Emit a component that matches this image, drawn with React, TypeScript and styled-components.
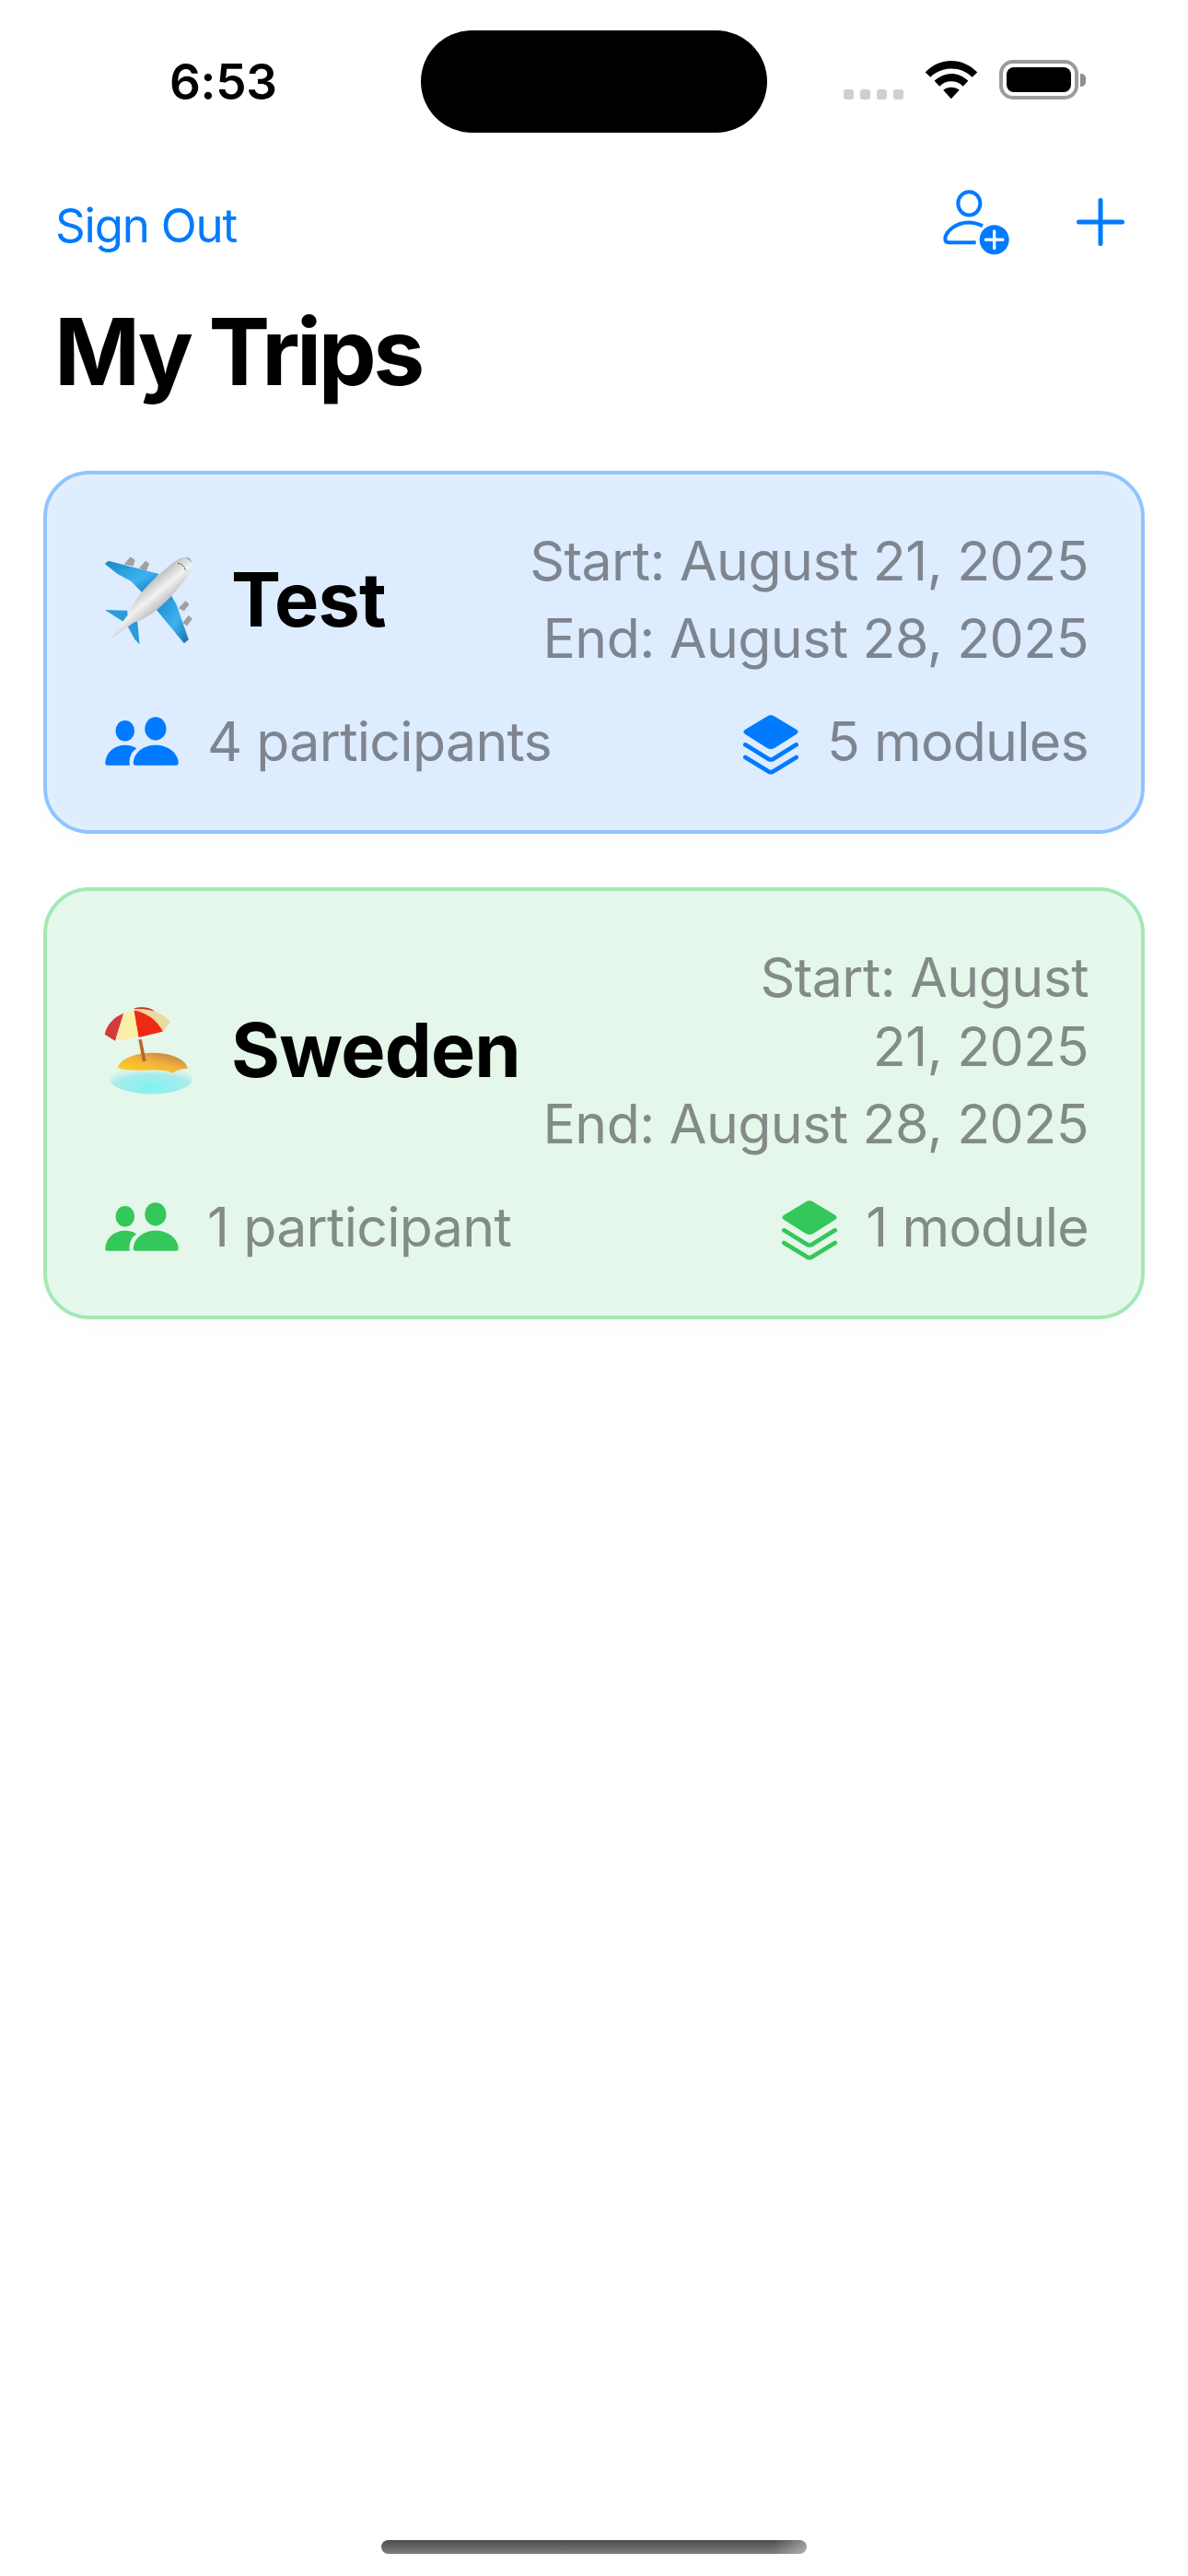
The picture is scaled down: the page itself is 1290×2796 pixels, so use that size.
import styled, { createGlobalStyle } from 'styled-components';

const GlobalStyle = createGlobalStyle`
  html, body {
    margin: 0;
    padding: 0;
    background: #ffffff;
  }
  body {
    font-family: Inter, "Liberation Sans", sans-serif;
  }
`;

type Tone = 'blue' | 'green';

const tones = {
  blue: { bg: '#ddecfe', edge: '#e6f1ff', border: '#90c4ff', text: '#7f8590', icon: '#007aff' },
  green: { bg: '#e4f7ea', edge: '#ebf9f0', border: '#a3e8b5', text: '#848a88', icon: '#34c759' },
};

const Page = styled.div`
  width: 1290px;
  min-height: 2796px;
  display: flex;
  flex-direction: column;
  background: #ffffff;
`;

const StatusBar = styled.div`
  display: grid;
  grid-template-columns: 457px 376px 1fr;
  padding-top: 33px;
`;

const Time = styled.div`
  padding-left: 184px;
  align-self: center;
  font-size: 53px;
  font-weight: 600;
  letter-spacing: -0.3px;
  color: #000;
`;

const Island = styled.div`
  height: 111px;
  border-radius: 56px;
  background: #000;
`;

const StatusIcons = styled.div`
  display: flex;
  align-items: flex-end;
  gap: 23px;
  padding: 32px 0 0 83px;
  align-self: start;
`;

const SignalDots = styled.div`
  display: flex;
  gap: 7px;
`;

const SignalDot = styled.span`
  width: 11px;
  height: 11px;
  border-radius: 3px;
  background: #cfcfcf;
`;

const Battery = styled.div`
  display: flex;
  align-items: center;
  gap: 2px;
`;

const BatteryShell = styled.div`
  box-sizing: border-box;
  width: 86px;
  height: 43px;
  padding: 4px;
  border: 4px solid #9c9c9c;
  border-radius: 15px;
  background: #fff;
`;

const BatteryFill = styled.div`
  height: 100%;
  border-radius: 8px;
  background: #000;
`;

const BatteryNub = styled.div`
  width: 6px;
  height: 14px;
  border-radius: 0 5px 5px 0;
  background: #8e8e8e;
`;

const NavRow = styled.div`
  display: flex;
  align-items: center;
  justify-content: space-between;
  margin-top: 61px;
  padding: 0 69px 0 60px;
  height: 72px;
`;

const SignOut = styled.button`
  border: 0;
  padding: 6px 0 0;
  background: none;
  font: 400 51px Inter, "Liberation Sans", sans-serif;
  letter-spacing: -1.2px;
  color: #007aff;
`;

const NavActions = styled.div`
  display: flex;
  align-items: center;
  gap: 72px;
`;

const Title = styled.h1`
  margin: 44px 0 0 59px;
  font-size: 100px;
  line-height: 121px;
  font-weight: 700;
  letter-spacing: -3.5px;
  color: #000;
`;

const CardList = styled.div`
  display: flex;
  flex-direction: column;
  gap: 58px;
  margin: 0 47px;
  padding-top: 69px;
`;

const Card = styled.section<{ $tone: Tone }>`
  padding: 56px 57px 59px 58px;
  border: 4px solid ${(p) => tones[p.$tone].border};
  border-radius: 50px;
  background: ${(p) => tones[p.$tone].bg};
  box-shadow:
    inset 0 0 24px ${(p) => tones[p.$tone].edge},
    0 6px 30px rgba(0, 0, 0, 0.015);
`;

const CardTop = styled.div`
  display: flex;
  align-items: center;
  justify-content: space-between;
`;

const Lead = styled.div`
  display: flex;
  align-items: center;
  gap: 41px;
  padding-left: 4px;
`;

const TripName = styled.h2`
  margin: 0;
  font-size: 81px;
  line-height: 96px;
  font-weight: 700;
  letter-spacing: -0.8px;
  color: #000;
`;

const Dates = styled.div`
  display: flex;
  flex-direction: column;
  gap: 9px;
  text-align: right;
`;

const DateLine = styled.div<{ $tone: Tone }>`
  font-size: 59px;
  font-weight: 430;
  line-height: 75px;
  letter-spacing: -0.55px;
  white-space: pre-line;
  color: ${(p) => tones[p.$tone].text};
`;

const CardFooter = styled.div`
  display: flex;
  align-items: center;
  justify-content: space-between;
  margin-top: 37px;
`;

const Stat = styled.div<{ $inset?: boolean }>`
  display: flex;
  align-items: center;
  gap: 31px;
  padding-left: ${(p) => (p.$inset ? '5px' : '0')};
`;

const StatText = styled.span<{ $tone: Tone }>`
  font-size: 59px;
  font-weight: 430;
  line-height: 75px;
  letter-spacing: -0.7px;
  color: ${(p) => tones[p.$tone].text};
`;

const LayersSvg = styled.svg`
  margin-top: 7px;
`;

const HomeIndicator = styled.div`
  width: 462px;
  height: 15px;
  margin: auto auto 24px;
  border-radius: 8px;
  background:
    linear-gradient(100deg, rgba(255, 255, 255, 0) 92%, rgba(255, 255, 255, 0.4)),
    linear-gradient(180deg, #4e4e4e, #7e7e7e);
`;

const WifiIcon = () => (
  <svg width="58" height="43" viewBox="670 103 175 130" fill="#000">
    <path d="M672 144C720 93 795 93 843 144L826 160C790 122 725 122 689 160Z" />
    <path d="M702 172C735 140 780 140 813 172L796 190C775 168 740 168 719 190Z" />
    <path d="M731 202C745 190 770 190 784 202L757 231Z" />
  </svg>
);

const PersonAddIcon = () => (
  <svg width="75" height="72" viewBox="725 525 225 215" fill="none">
    <ellipse cx="816" cy="572" rx="36" ry="38" stroke="#007aff" strokeWidth="12" />
    <path
      d="M860 645C842 637 828 634 815 634C772 634 738 664 738 688Q738 699 750 699L838 699"
      stroke="#007aff"
      strokeWidth="12"
    />
    <circle cx="898" cy="690" r="48" fill="#007aff" />
    <path d="M898 662V718M870 690H926" stroke="#fff" strokeWidth="10" strokeLinecap="round" />
  </svg>
);

const PlusIcon = () => (
  <svg width="52" height="52" viewBox="0 0 52 52" fill="none">
    <path d="M26 2.5V49.5M2.5 26H49.5" stroke="#007aff" strokeWidth="5" strokeLinecap="round" />
  </svg>
);

const PeopleIcon = ({ color }: { color: string }) => (
  <svg width="80" height="53" viewBox="45 48 240 160" fill={color}>
    <ellipse cx="110" cy="94" rx="31" ry="34" />
    <ellipse cx="210" cy="87" rx="35" ry="38" />
    <path d="M45 198C48 165 75 141 110 141C125 141 138 145 148 152C132 160 122 180 125 207L52 207Q45 207 45 198Z" />
    <path d="M137 198C140 165 170 141 210 141C250 141 282 165 285 198Q285 207 277 207L145 207Q137 207 137 198Z" />
  </svg>
);

const LayersIcon = ({ color }: { color: string }) => (
  <LayersSvg width="60" height="65" viewBox="83 45 180 195" fill="none">
    <path d="M160 50Q173 42 186 50L256 92Q268 100 256 108L186 152Q173 160 160 152L90 108Q78 100 90 92Z" fill={color} />
    <path d="M90 142L165 188Q173 193 181 188L256 142" stroke={color} strokeWidth="14" strokeLinecap="round" />
    <path d="M90 183L165 229Q173 234 181 229L256 183" stroke={color} strokeWidth="14" strokeLinecap="round" />
  </LayersSvg>
);

const PlaneEmoji = () => (
  <svg width="97" height="100" viewBox="70 60 290 300">
    <defs>
      <linearGradient id="wing" x1="0" y1="0" x2="1" y2="1">
        <stop offset="0" stopColor="#1786c9" />
        <stop offset="0.6" stopColor="#3cb2f0" />
        <stop offset="1" stopColor="#156fa8" />
      </linearGradient>
      <linearGradient id="body" x1="0.25" y1="0.2" x2="0.75" y2="0.8">
        <stop offset="0" stopColor="#7d7d7d" />
        <stop offset="0.5" stopColor="#f2f2f2" />
        <stop offset="1" stopColor="#767676" />
      </linearGradient>
    </defs>
    <g fill="#a0a0a0">
      <path d="M135 95L155 70L170 80L165 100Z" />
      <path d="M183 107L205 83L217 92L207 116Z" />
      <path d="M312 238L335 213L347 225L330 247Z" />
      <path d="M325 285L345 260L357 272L340 295Z" />
    </g>
    <path d="M72 93L84 83L248 126L195 188L158 150L112 125Z" fill="url(#wing)" />
    <path d="M282 185L305 225L345 340L330 352L238 240Z" fill="url(#wing)" />
    <path d="M72 243L145 245L150 285L130 280Z" fill="#2a9bdb" />
    <path d="M140 285L178 278L185 355L170 340Z" fill="#2a9bdb" />
    <path
      d="M92 332L150 255C170 200 230 140 300 85C325 65 350 70 355 85C362 110 340 140 300 185C260 230 215 270 165 285L96 335Z"
      fill="url(#body)"
    />
    <path d="M335 72C345 72 353 78 355 90C352 84 345 78 335 72Z" fill="#35a5e0" />
    <path d="M310 92C322 92 332 100 335 116" fill="none" stroke="#444" strokeWidth="3" strokeDasharray="6 3" />
  </svg>
);

const IslandEmoji = () => (
  <svg width="97" height="96" viewBox="70 65 285 282">
    <defs>
      <radialGradient id="water" cx="0.5" cy="0.75" r="0.6">
        <stop offset="0" stopColor="#7df3f2" />
        <stop offset="0.75" stopColor="#a8ecec" />
        <stop offset="1" stopColor="#d2f3ec" />
      </radialGradient>
      <linearGradient id="sand" x1="0" y1="1" x2="0.8" y2="0">
        <stop offset="0" stopColor="#fbdc1e" />
        <stop offset="0.6" stopColor="#f2ae3c" />
        <stop offset="1" stopColor="#b5834b" />
      </linearGradient>
    </defs>
    <ellipse cx="221" cy="300" rx="131" ry="45" fill="url(#water)" />
    <path
      d="M113 262C118 235 165 213 225 213C285 213 335 235 338 266C330 265 305 268 290 280C250 262 200 275 150 270C135 268 120 268 113 262Z"
      fill="url(#sand)"
      stroke="#eef8ea"
      strokeWidth="2"
    />
    <path d="M180 172L190 171L204 240L193 242Z" fill="#b8682a" />
    <path d="M165 72C185 66 215 66 232 82L170 78Z" fill="#d42a28" />
    <path d="M168 74C215 70 265 90 281 116L258 146C240 110 205 85 165 78Z" fill="#ecd9a0" />
    <path d="M165 78C205 85 240 110 258 146C235 152 205 160 180 165Z" fill="#ee2a14" />
    <path d="M132 88C145 82 155 80 165 78L180 165C150 168 125 172 105 176Z" fill="#fbeea8" />
    <path d="M72 155C80 120 105 100 132 88L105 176Z" fill="#d63a3a" />
  </svg>
);

const trips = [
  {
    id: 1,
    tone: 'blue' as Tone,
    emoji: <PlaneEmoji />,
    name: 'Test',
    start: 'Start: August 21, 2025',
    end: 'End: August 28, 2025',
    participants: '4 participants',
    modules: '5 modules',
  },
  {
    id: 2,
    tone: 'green' as Tone,
    emoji: <IslandEmoji />,
    name: 'Sweden',
    start: 'Start: August\n21, 2025',
    end: 'End: August 28, 2025',
    participants: '1 participant',
    modules: '1 module',
  },
];

export default function App() {
  return (
    <Page>
      <GlobalStyle />
      <StatusBar>
        <Time>6:53</Time>
        <Island />
        <StatusIcons>
          <SignalDots>
            <SignalDot />
            <SignalDot />
            <SignalDot />
            <SignalDot />
          </SignalDots>
          <WifiIcon />
          <Battery>
            <BatteryShell>
              <BatteryFill />
            </BatteryShell>
            <BatteryNub />
          </Battery>
        </StatusIcons>
      </StatusBar>
      <NavRow>
        <SignOut type="button">Sign Out</SignOut>
        <NavActions>
          <PersonAddIcon />
          <PlusIcon />
        </NavActions>
      </NavRow>
      <Title>My Trips</Title>
      <CardList>
        {trips.map((trip) => (
          <Card key={trip.id} $tone={trip.tone}>
            <CardTop>
              <Lead>
                {trip.emoji}
                <TripName>{trip.name}</TripName>
              </Lead>
              <Dates>
                <DateLine $tone={trip.tone}>{trip.start}</DateLine>
                <DateLine $tone={trip.tone}>{trip.end}</DateLine>
              </Dates>
            </CardTop>
            <CardFooter>
              <Stat $inset>
                <PeopleIcon color={tones[trip.tone].icon} />
                <StatText $tone={trip.tone}>{trip.participants}</StatText>
              </Stat>
              <Stat>
                <LayersIcon color={tones[trip.tone].icon} />
                <StatText $tone={trip.tone}>{trip.modules}</StatText>
              </Stat>
            </CardFooter>
          </Card>
        ))}
      </CardList>
      <HomeIndicator />
    </Page>
  );
}
